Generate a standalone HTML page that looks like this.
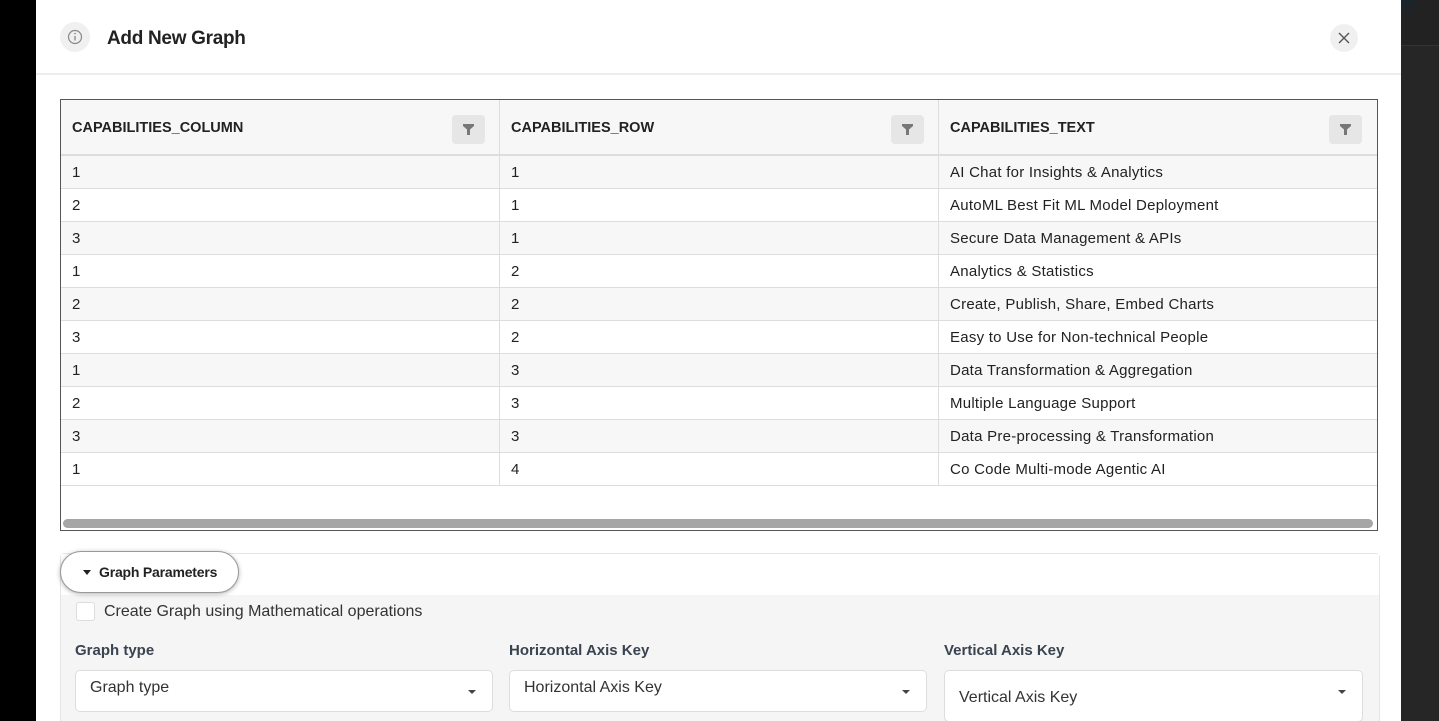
<!DOCTYPE html>
<html><head><meta charset="utf-8"><style>
*{box-sizing:border-box;margin:0;padding:0}
body{width:1439px;height:721px;overflow:hidden;background:#000;font-family:"Liberation Sans",sans-serif;position:relative}
.right{position:absolute;left:1401px;top:0;width:38px;height:721px;background:#262626}
.right .top{height:46px;border-bottom:1px solid #333;background:#222}
.modal{position:absolute;left:36px;top:0;width:1365px;height:721px;background:#fff;overflow:hidden}
.hdr{height:75px;border-bottom:2px solid #ececec;position:relative}
.info{position:absolute;left:24px;top:22px;width:30px;height:30px;border-radius:50%;background:#f0f0f0}
.title{position:absolute;left:71px;top:28px;font-size:19px;font-weight:bold;color:#222;letter-spacing:-0.3px}
.close{position:absolute;left:1294px;top:24px;width:28px;height:28px;border-radius:50%;background:#f0f0f0}
.tbl{position:absolute;left:24px;top:99px;width:1318px;height:432px;border:1.5px solid #555;background:#fff}
.row{position:absolute;left:0;width:1316px;height:33px;border-bottom:1px solid #ddd;font-size:15px;letter-spacing:0.25px;color:#222}
.row div{position:absolute;top:0;height:100%;line-height:33px;padding-left:11px;border-right:1px solid #ddd}
.c1{left:0;width:439px}.c2{left:439px;width:439px}.c3{left:878px;width:438px;border-right:none!important}
.head{top:0;height:56px;background:#f7f7f7;border-bottom:2px solid #ddd;font-weight:bold;font-size:14.5px;letter-spacing:0}
.head div{line-height:56px}
.flt{position:absolute;top:15px;width:33px;height:29px;border-radius:4px;background:#e6e6e6}
.flt svg{position:absolute;left:11px;top:9px}
.sb{position:absolute;left:2px;top:419px;width:1310px;height:9px;border-radius:5px;background:#a6a6a6}
.sec{position:absolute;left:24px;top:553px;width:1320px;height:200px;border:1px solid #e5e5e5;border-radius:4px;background:#f5f5f5}
.sec .w{position:absolute;left:0;top:0;width:100%;height:41px;background:#fff}
.pill{position:absolute;left:24px;top:551px;width:179px;height:42px;border-radius:21px;background:#fff;border:1px solid #999;box-shadow:0 1px 5px rgba(0,0,0,.3);font-size:14px;font-weight:bold;color:#222;line-height:40px;padding-left:38px;letter-spacing:-0.2px}
.pill:before{content:"";position:absolute;left:22px;top:18px;border:4px solid transparent;border-top:5px solid #222}
.cb{position:absolute;left:40px;top:602px;width:19px;height:19px;border:1px solid #ddd;border-radius:3px;background:#fff}
.cbl{position:absolute;left:68px;top:603px;font-size:16px;color:#333}
.lbl{position:absolute;top:642px;font-size:15px;font-weight:bold;color:#3a4350}
.sel{position:absolute;height:42px;border:1px solid #ddd;border-radius:5px;background:#fff;font-size:16px;color:#333;padding-left:14px}
.sel:after{content:"";position:absolute;right:16px;top:19px;border:4px solid transparent;border-top:4px solid #444}
</style></head><body>
<div class="right"><div class="top"></div></div>
<div class="modal">
<div class="hdr">
<div class="info"><svg width="30" height="30" viewBox="0 0 30 30"><circle cx="15" cy="15" r="6.5" fill="none" stroke="#888" stroke-width="1.2"/><line x1="15" y1="14" x2="15" y2="18.5" stroke="#888" stroke-width="1.3"/><circle cx="15" cy="11.6" r=".8" fill="#888"/></svg></div>
<div class="title">Add New Graph</div>
<div class="close"><svg width="28" height="28" viewBox="0 0 28 28"><path d="M9 9L19 19M19 9L9 19" stroke="#555" stroke-width="1.4"/></svg></div>
</div>
<div class="tbl">
<div class="row head"><div class="c1">CAPABILITIES_COLUMN<span class="flt" style="left:391px"><svg width="11" height="11" viewBox="0 0 11 11"><path d="M0 0H11V2L7 5.5V11H4V5.5L0 2Z" fill="#777"/></svg></span></div><div class="c2">CAPABILITIES_ROW<span class="flt" style="left:391px"><svg width="11" height="11" viewBox="0 0 11 11"><path d="M0 0H11V2L7 5.5V11H4V5.5L0 2Z" fill="#777"/></svg></span></div><div class="c3">CAPABILITIES_TEXT<span class="flt" style="left:390px"><svg width="11" height="11" viewBox="0 0 11 11"><path d="M0 0H11V2L7 5.5V11H4V5.5L0 2Z" fill="#777"/></svg></span></div></div>
<div class="row" style="top:56px;background:#f7f7f7"><div class="c1">1</div><div class="c2">1</div><div class="c3">AI Chat for Insights &amp; Analytics</div></div>
<div class="row" style="top:89px"><div class="c1">2</div><div class="c2">1</div><div class="c3">AutoML Best Fit ML Model Deployment</div></div>
<div class="row" style="top:122px;background:#f7f7f7"><div class="c1">3</div><div class="c2">1</div><div class="c3">Secure Data Management &amp; APIs</div></div>
<div class="row" style="top:155px"><div class="c1">1</div><div class="c2">2</div><div class="c3">Analytics &amp; Statistics</div></div>
<div class="row" style="top:188px;background:#f7f7f7"><div class="c1">2</div><div class="c2">2</div><div class="c3">Create, Publish, Share, Embed Charts</div></div>
<div class="row" style="top:221px"><div class="c1">3</div><div class="c2">2</div><div class="c3">Easy to Use for Non-technical People</div></div>
<div class="row" style="top:254px;background:#f7f7f7"><div class="c1">1</div><div class="c2">3</div><div class="c3">Data Transformation &amp; Aggregation</div></div>
<div class="row" style="top:287px"><div class="c1">2</div><div class="c2">3</div><div class="c3">Multiple Language Support</div></div>
<div class="row" style="top:320px;background:#f7f7f7"><div class="c1">3</div><div class="c2">3</div><div class="c3">Data Pre-processing &amp; Transformation</div></div>
<div class="row" style="top:353px"><div class="c1">1</div><div class="c2">4</div><div class="c3">Co Code Multi-mode Agentic AI</div></div>
<div class="sb"></div>
</div>
<div class="sec"><div class="w"></div></div>
<div class="pill">Graph Parameters</div>
<div class="cb"></div><div class="cbl">Create Graph using Mathematical operations</div>
<div class="lbl" style="left:39px">Graph type</div>
<div class="lbl" style="left:473px">Horizontal Axis Key</div>
<div class="lbl" style="left:908px">Vertical Axis Key</div>
<div class="sel" style="left:39px;top:670px;width:418px;line-height:34px">Graph type</div>
<div class="sel" style="left:473px;top:670px;width:418px;line-height:34px">Horizontal Axis Key</div>
<div class="sel" style="left:908px;top:670px;width:419px;height:52px;line-height:54px">Vertical Axis Key</div>
</div>
<svg style="position:absolute;left:1400px;top:0" width="20" height="16"><circle cx="8" cy="6" r="6" fill="none" stroke="#0e2a3a" stroke-width="1.5"/></svg>
</body></html>
